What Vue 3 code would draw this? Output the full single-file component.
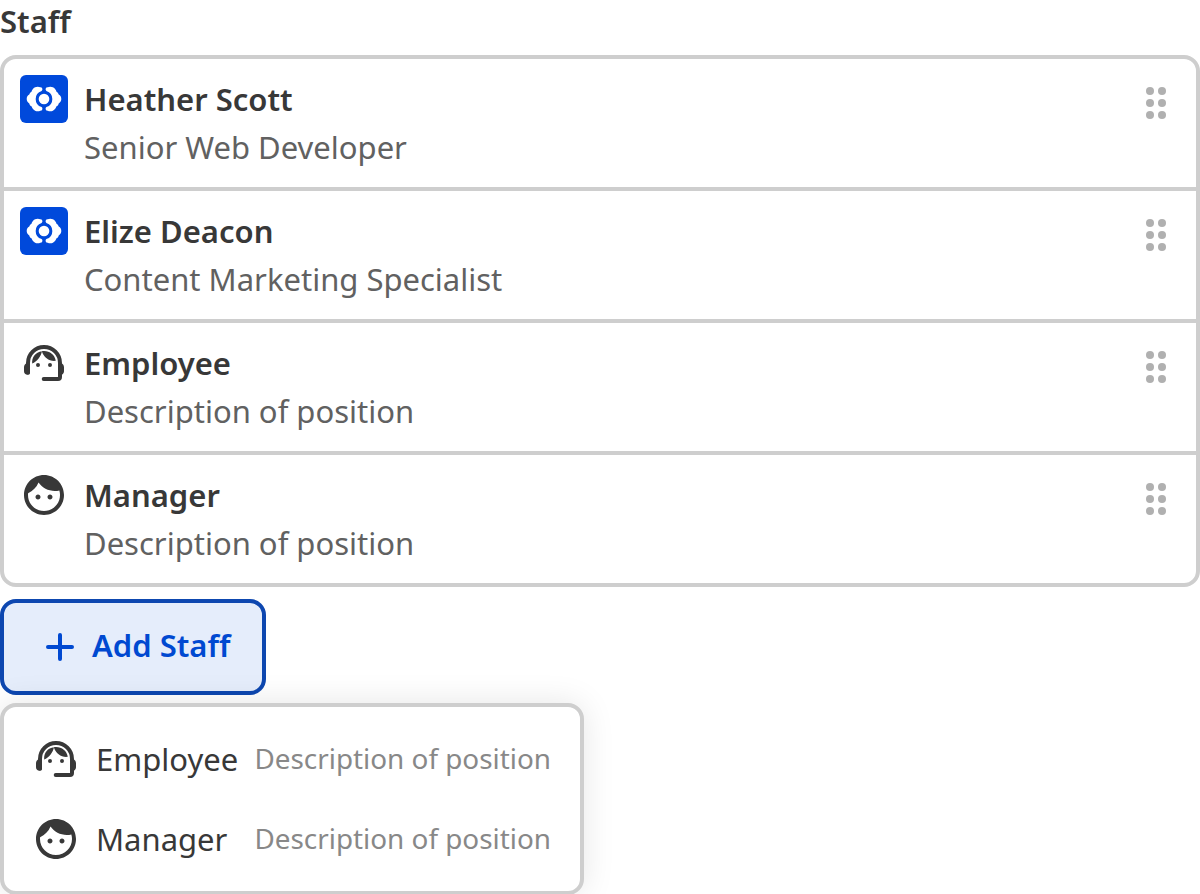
<template>
  <div class="page">
    <label class="label">Staff</label>

    <ul class="list">
      <li class="item" v-for="(person, index) in staff" :key="index">
        <svg v-if="person.icon === 'logo'" class="icon" viewBox="0 0 48 48">
          <rect width="48" height="48" rx="6" fill="#0049db" />
          <path :d="lobe" fill="#fff" />
          <path :d="lobe" fill="#fff" transform="matrix(-1 0 0 1 48 0)" />
          <circle cx="24" cy="24" r="5.3" fill="#fff" />
        </svg>
        <svg v-else-if="person.icon === 'agent'" class="icon" viewBox="0 0 48 48">
          <path :d="agentFill" fill="currentColor" />
          <path :d="agentLine" fill="none" stroke="currentColor" stroke-width="4" stroke-linecap="round" />
        </svg>
        <svg v-else class="icon" viewBox="0 0 24 24">
          <path :d="face" fill="currentColor" />
        </svg>
        <div class="info">
          <p class="name">{{ person.name }}</p>
          <p class="position">{{ person.position }}</p>
        </div>
        <svg class="handle" viewBox="0 0 48 48">
          <circle v-for="n in 6" :key="n" :cx="n % 2 ? 18 : 30" :cy="Math.ceil(n / 2) * 12" r="4" />
        </svg>
      </li>
    </ul>

    <button type="button" class="add">
      <svg class="icon" viewBox="0 0 48 48">
        <path d="M24 12v24M12 24h24" stroke="currentColor" stroke-width="4" stroke-linecap="round" />
      </svg>
      <span class="addText">Add Staff</span>
    </button>

    <div class="menu">
      <div class="option" v-for="option in options" :key="option.name">
        <svg v-if="option.icon === 'agent'" class="icon" viewBox="0 0 48 48">
          <path :d="agentFill" fill="currentColor" />
          <path :d="agentLine" fill="none" stroke="currentColor" stroke-width="4" stroke-linecap="round" />
        </svg>
        <svg v-else class="icon" viewBox="0 0 24 24">
          <path :d="face" fill="currentColor" />
        </svg>
        <span class="optionName">{{ option.name }}</span>
        <span class="optionText">{{ option.position }}</span>
      </div>
    </div>
  </div>
</template>

<script setup>
import { ref } from 'vue'

const staff = ref([
  { icon: 'logo', name: 'Heather Scott', position: 'Senior Web Developer' },
  { icon: 'logo', name: 'Elize Deacon', position: 'Content Marketing Specialist' },
  { icon: 'agent', name: 'Employee', position: 'Description of position' },
  { icon: 'face', name: 'Manager', position: 'Description of position' },
])

const options = ref([
  { icon: 'agent', name: 'Employee', position: 'Description of position' },
  { icon: 'face', name: 'Manager', position: 'Description of position' },
])

// half of the logo, the other half is mirrored
const lobe = 'M21.600 15.900a2 2 0 0 0-1.400-3.600c-1.300-.7-3.600-.7-5.100 0c-2 1-3 2.600-3.600 4.400c-1.200.6-1.900 1.600-2.200 2.900c-1.700.9-2.600 2.500-2.600 4.400s.9 3.500 2.600 4.400c.3 1.300 1 2.300 2.200 2.900c.6 1.800 1.600 3.400 3.600 4.400c1.500.7 3.800.7 5.100 0a2 2 0 0 0 1.400-3.600a8.500 8.500 0 0 1 0-16.200z'
// ear cups, hair and eyes
const agentFill = 'M6 24.400h4v9.300a2 2 0 0 1-2 2h-.5c-2 0-3.500-1.500-3.500-3.500v-4c0-1.500.8-3.100 2-3.800zM42 24.400c1.200.7 2 2.300 2 3.800v4c0 1.500-.8 2.800-2 3.500h-3v-11.300zM12.200 24.600C11.600 18.500 15.200 13 22 12.200C20.800 17.800 17 22.300 12.200 24.600zM21.800 12.200C28.500 11 34.700 15 35.800 21.800C29.500 22.600 24 18.800 21.800 12.200zM18 24a2 2 0 1 1 0 4a2 2 0 1 1 0-4zM30 24a2 2 0 1 1 0 4a2 2 0 1 1 0-4z'
const agentLine = 'M8 33.500V24a16 16 0 0 1 32 0v14q0 2-2 2H23.700'
const face = 'M9 11.75c-.69 0-1.25.56-1.25 1.25s.56 1.25 1.25 1.25 1.25-.56 1.25-1.25-.56-1.25-1.25-1.25zm6 0c-.69 0-1.25.56-1.25 1.25s.56 1.25 1.25 1.25 1.25-.56 1.25-1.25-.56-1.25-1.25-1.25zM12 2C6.480 2 2 6.480 2 12s4.480 10 10 10 10-4.480 10-10S17.520 2 12 2zm0 18c-4.410 0-8-3.590-8-8 0-.29.02-.58.05-.86 2.360-1.050 4.230-2.980 5.210-5.370C11.070 8.330 14.050 10 17.420 10c.78 0 1.530-.09 2.250-.26.21.71.33 1.470.33 2.260 0 4.410-3.590 8-8 8z'
</script>

<style>
body {
  background-color: #fff;
}
</style>

<style scoped>
.page {
  height: 894px;
  overflow: hidden;
  font-family: 'Noto Sans', sans-serif;
  font-size: 31px;
  line-height: 48px;
  color: #383838;
}

.label {
  display: block;
  line-height: 42px;
  padding-bottom: 13px;
  font-weight: 600;
}

.list {
  list-style: none;
  margin: 0;
  padding: 0;
  border: 4px solid #cecece;
  border-radius: 16px;
}

.item {
  display: flex;
  align-items: flex-start;
  gap: 16px;
  padding: 16px;
}

.item + .item {
  border-top: 4px solid #cecece;
}

.icon {
  display: block;
  flex: none;
  width: 48px;
  height: 48px;
}

.info {
  flex: 1;
}

.name,
.position {
  margin: 0;
}

.name {
  font-weight: 600;
}

.position {
  color: #616161;
}

.handle {
  width: 48px;
  height: 48px;
  margin-top: 4px;
  fill: #b0b0b0;
}

.add {
  display: flex;
  align-items: center;
  gap: 8px;
  box-sizing: border-box;
  width: 266px;
  height: 96px;
  margin: 12px 0 8px;
  padding: 0 0 0 32px;
  border: 4px solid #0d47b0;
  border-radius: 16px;
  background-color: #e5edfb;
  color: #0049d1;
  font: inherit;
  font-weight: 600;
  white-space: nowrap;
}

.addText {
  padding-bottom: 4px;
}

.menu {
  position: relative;
  box-sizing: border-box;
  width: 584px;
  padding: 12px 28px;
  border: 4px solid #cecece;
  border-radius: 16px;
  background-color: #fff;
  box-shadow: 0 0 32px rgba(0, 0, 0, 0.1);
}

.option {
  display: flex;
  align-items: center;
  gap: 16px;
  height: 80px;
  white-space: nowrap;
}

.optionName {
  width: 142.5px;
}

.optionText {
  padding-bottom: 2px;
  font-size: 27.85px;
  color: #888;
}
</style>
